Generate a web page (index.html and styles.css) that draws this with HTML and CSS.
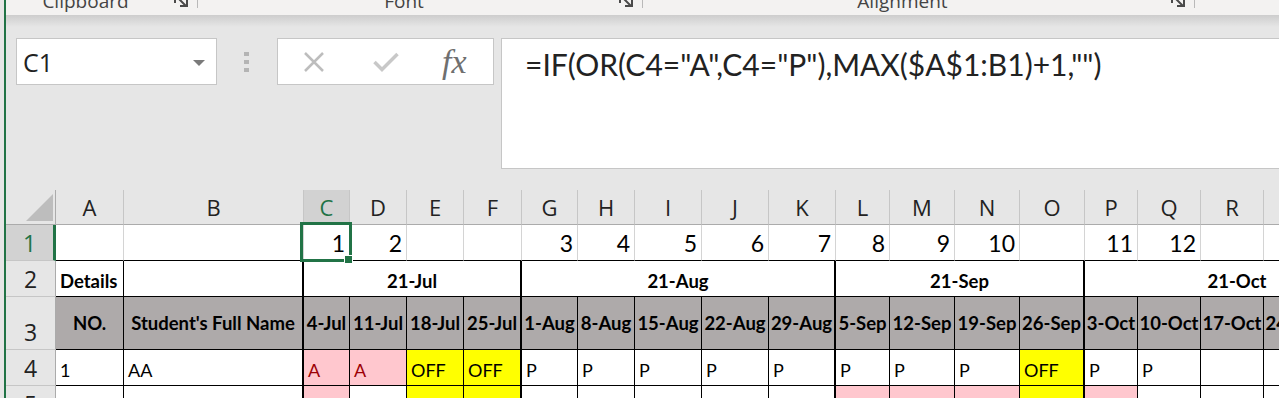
FILE: index.html
```html
<!DOCTYPE html>
<html lang="en">
<head>
  <meta charset="UTF-8">
  <title>Attendance - Excel</title>
  <link rel="stylesheet" href="styles.css">
</head>
<body>

<div class="app">
  <div class="ribbon">
    <div class="group group-clipboard">
      <span class="group-label">Clipboard</span>
      <svg class="launcher" width="17" height="15" viewBox="0 0 17 15"><path d="M2 -6 V3 M5 -2 L13 6 M7 6 H14 V-1" fill="none" stroke="#4a4a4a" stroke-width="2"/></svg>
    </div>
    <div class="sep"></div>
    <div class="group group-font">
      <span class="group-label">Font</span>
      <svg class="launcher" width="17" height="15" viewBox="0 0 17 15"><path d="M2 -6 V3 M5 -2 L13 6 M7 6 H14 V-1" fill="none" stroke="#4a4a4a" stroke-width="2"/></svg>
    </div>
    <div class="sep"></div>
    <div class="group group-align">
      <span class="group-label">Alignment</span>
      <svg class="launcher" width="17" height="15" viewBox="0 0 17 15"><path d="M2 -6 V3 M5 -2 L13 6 M7 6 H14 V-1" fill="none" stroke="#4a4a4a" stroke-width="2"/></svg>
    </div>
    <div class="sep"></div>
  </div>

  <div class="formula-area">
    <div class="name-box">
      <span>C1</span>
      <span class="name-drop"></span>
    </div>
    <div class="grip"><i></i><i></i><i></i></div>
    <div class="fx-box">
      <svg class="btn-cancel" width="22" height="20" viewBox="0 0 22 20"><path d="M2 1 L20 19 M20 1 L2 19" stroke="#bdbdbd" stroke-width="2.5"/></svg>
      <svg class="btn-enter" width="26" height="20" viewBox="0 0 26 20"><path d="M1.5 10 L9 17.5 L24.5 2" fill="none" stroke="#c8c8c8" stroke-width="3.5"/></svg>
      <span class="fx">fx</span>
    </div>
    <div class="formula-input">=IF(OR(C4="A",C4="P"),MAX($A$1:B1)+1,"")</div>
  </div>

  <div class="sheet">
    <!-- column headers -->
    <div class="corner"><svg width="27" height="27" viewBox="0 0 27 27"><polygon points="27,0 27,27 0,27" fill="#bdbdbd"/></svg></div>
    <div class="hd">A</div><div class="hd">B</div><div class="hd sel">C</div><div class="hd">D</div>
    <div class="hd">E</div><div class="hd">F</div><div class="hd">G</div><div class="hd">H</div>
    <div class="hd">I</div><div class="hd">J</div><div class="hd">K</div><div class="hd">L</div>
    <div class="hd">M</div><div class="hd">N</div><div class="hd">O</div><div class="hd">P</div>
    <div class="hd">Q</div><div class="hd">R</div><div class="hd">S</div><div class="hd">T</div>

    <!-- row 1 -->
    <div class="rh sel">1</div>
    <div class="c n"></div><div class="c n"></div>
    <div class="c n active">1<span class="selection"><span class="handle"></span></span></div>
    <div class="c n">2</div><div class="c n"></div><div class="c n"></div>
    <div class="c n">3</div><div class="c n">4</div><div class="c n">5</div><div class="c n">6</div><div class="c n">7</div>
    <div class="c n">8</div><div class="c n">9</div><div class="c n">10</div><div class="c n"></div>
    <div class="c n">11</div><div class="c n">12</div><div class="c n"></div><div class="c n"></div><div class="c n"></div>

    <!-- row 2 -->
    <div class="rh">2</div>
    <div class="c b">Details</div>
    <div class="c end"></div>
    <div class="c b ctr end span4">21-Jul</div>
    <div class="c b ctr end span5">21-Aug</div>
    <div class="c b ctr end span4">21-Sep</div>
    <div class="c b ctr span5">21-Oct</div>

    <!-- row 3 -->
    <div class="rh">3</div>
    <div class="c hdr">NO.</div>
    <div class="c hdr end">Student's Full Name</div>
    <div class="c hdr">4-Jul</div><div class="c hdr">11-Jul</div><div class="c hdr">18-Jul</div><div class="c hdr end">25-Jul</div>
    <div class="c hdr">1-Aug</div><div class="c hdr">8-Aug</div><div class="c hdr">15-Aug</div><div class="c hdr">22-Aug</div><div class="c hdr end">29-Aug</div>
    <div class="c hdr">5-Sep</div><div class="c hdr">12-Sep</div><div class="c hdr">19-Sep</div><div class="c hdr end">26-Sep</div>
    <div class="c hdr">3-Oct</div><div class="c hdr">10-Oct</div><div class="c hdr">17-Oct</div><div class="c hdr">24-Oct</div><div class="c hdr">31-Oct</div>

    <!-- row 4 -->
    <div class="rh">4</div>
    <div class="c">1</div>
    <div class="c end">AA</div>
    <div class="c absent">A</div><div class="c absent">A</div><div class="c off">OFF</div><div class="c off end">OFF</div>
    <div class="c">P</div><div class="c">P</div><div class="c">P</div><div class="c">P</div><div class="c end">P</div>
    <div class="c">P</div><div class="c">P</div><div class="c">P</div><div class="c off end">OFF</div>
    <div class="c">P</div><div class="c">P</div><div class="c"></div><div class="c"></div><div class="c"></div>

    <!-- row 5 -->
    <div class="rh">5</div>
    <div class="c"></div>
    <div class="c end"></div>
    <div class="c absent"></div><div class="c"></div><div class="c off"></div><div class="c off end"></div>
    <div class="c"></div><div class="c"></div><div class="c"></div><div class="c"></div><div class="c end"></div>
    <div class="c absent"></div><div class="c absent"></div><div class="c absent"></div><div class="c off end"></div>
    <div class="c absent"></div><div class="c"></div><div class="c"></div><div class="c"></div><div class="c"></div>
  </div>
</div>

</body>
</html>
```

FILE: styles.css
```css
body {
  margin: 0;
  background: #e6e6e6;
  overflow: hidden;
}

.app {
  margin-left: 4px;
  border-left: 2px solid #217346;
  height: 398px;
  overflow: hidden;
}

/* ribbon (cut off at the top) */
.ribbon {
  display: flex;
  height: 15px;
  background: #f3f2f1;
  overflow: hidden;
  font-family: "Open Sans", "Noto Sans", sans-serif;
  font-size: 19px;
  color: #444;
}

.group {
  display: flex;
  flex-shrink: 0;
}

.group-clipboard { width: 191px; }
.group-font { width: 444px; }
.group-align { width: 551px; }

.group-label {
  flex: 1;
  text-align: center;
  line-height: 19px;
  margin-top: -8px;
  padding-right: 8px;
  white-space: nowrap;
}

.launcher {
  margin-right: 7px;
  flex-shrink: 0;
}

.sep {
  width: 1px;
  height: 8px;
  flex-shrink: 0;
  background: #b9b9b9;
}

/* name box + formula bar */
.formula-area {
  display: flex;
  align-items: flex-start;
  height: 175px;
  box-sizing: border-box;
  padding: 23px 0 0 10px;
  background: linear-gradient(#cdcdcd, #e6e6e6 12px);
}

.formula-area > * {
  flex-shrink: 0;
}

.name-box {
  display: flex;
  align-items: center;
  justify-content: space-between;
  width: 201px;
  height: 47px;
  box-sizing: border-box;
  padding: 0 11px 0 6px;
  background: #fff;
  border: 1px solid #c6c6c6;
  font-family: "Open Sans", "Noto Sans", sans-serif;
  font-size: 25px;
  color: #222;
}

.name-drop {
  width: 0;
  height: 0;
  border-left: 6.5px solid transparent;
  border-right: 6.5px solid transparent;
  border-top: 6px solid #7a7a7a;
  margin-top: 2px;
}

.grip {
  display: flex;
  flex-direction: column;
  gap: 4px;
  margin: 14px 28px 0 27px;
}

.grip i {
  display: block;
  width: 5px;
  height: 4px;
  background: #b4b4b4;
}

.fx-box {
  display: flex;
  align-items: center;
  width: 217px;
  height: 47px;
  box-sizing: border-box;
  padding-left: 25px;
  background: #fff;
  border: 1px solid #c6c6c6;
}

.btn-enter { margin-left: 48px; }

.fx {
  margin-left: 43px;
  font-family: "Liberation Serif", serif;
  font-style: italic;
  font-size: 34px;
  line-height: 1;
  color: #6f6f6f;
}

.formula-input {
  width: 800px;
  height: 131px;
  box-sizing: border-box;
  margin-left: 7px;
  padding: 10px 0 0 23px;
  background: #fff;
  border: 1px solid #c6c6c6;
  font-family: Lato, "Liberation Sans", sans-serif;
  font-size: 30px;
  line-height: 1;
  color: #222;
  white-space: nowrap;
}

/* worksheet grid */
.sheet {
  display: grid;
  grid-template-columns: 50px 68px 180px 46px 57px 57px 58px 56px 57px 67px 67px 67px 54px 65px 65px 65px 53px 63px 63px 63px 63px;
  grid-template-rows: 35px 36px 36px 53px 36px 36px;
  font-family: Lato, "Liberation Sans", sans-serif;
}

.corner {
  display: flex;
  justify-content: flex-end;
  align-items: flex-end;
  padding: 0 2px 3px 0;
  border-right: 1px solid #ababab;
  border-bottom: 1px solid #ababab;
}

.hd {
  display: flex;
  justify-content: center;
  align-items: center;
  border-right: 1px solid #c6c6c6;
  border-bottom: 1px solid #ababab;
  font-family: "Open Sans", "Noto Sans", sans-serif;
  font-size: 22px;
  color: #222;
}

.rh {
  display: flex;
  justify-content: center;
  align-items: flex-end;
  padding-bottom: 5px;
  border-right: 1px solid #ababab;
  border-bottom: 1px solid #c6c6c6;
  font-family: "Open Sans", "Noto Sans", sans-serif;
  font-size: 23px;
  line-height: 1;
  color: #222;
}

.hd.sel, .rh.sel {
  background: #d2d2d2;
  color: #217346;
}

.rh.sel {
  border-right: 3px solid #217346;
}

.c {
  display: flex;
  align-items: flex-end;
  padding: 0 4px 6px;
  background: #fff;
  border-right: 1px solid #000;
  border-bottom: 1px solid #000;
  font-size: 18px;
  line-height: 1;
  color: #000;
  white-space: nowrap;
  overflow: hidden;
}

.c.n {
  justify-content: flex-end;
  padding-bottom: 5px;
  border-right-color: #d4d4d4;
  font-size: 23px;
}

.c.end { border-right-width: 2px; }
.c.b { font-weight: bold; font-size: 18.5px; }
.c.ctr { justify-content: center; }

.span4 { grid-column: span 4; }
.span5 { grid-column: span 5; }

.c.hdr {
  align-items: center;
  justify-content: center;
  padding: 0;
  background: #aeaaaa;
  font-weight: bold;
  font-size: 18.5px;
}

.c.absent {
  background: #ffc7ce;
  color: #9c0006;
}

.c.off { background: #ffff00; }

/* active cell */
.c.active {
  position: relative;
  overflow: visible;
}

.selection {
  position: absolute;
  left: -4px;
  top: -3px;
  width: 52px;
  height: 40px;
  box-sizing: border-box;
  border: 3px solid #217346;
  z-index: 2;
}

.handle {
  position: absolute;
  left: 41px;
  top: 30px;
  width: 7px;
  height: 7px;
  background: #217346;
  border: 1px solid #fff;
}
```
